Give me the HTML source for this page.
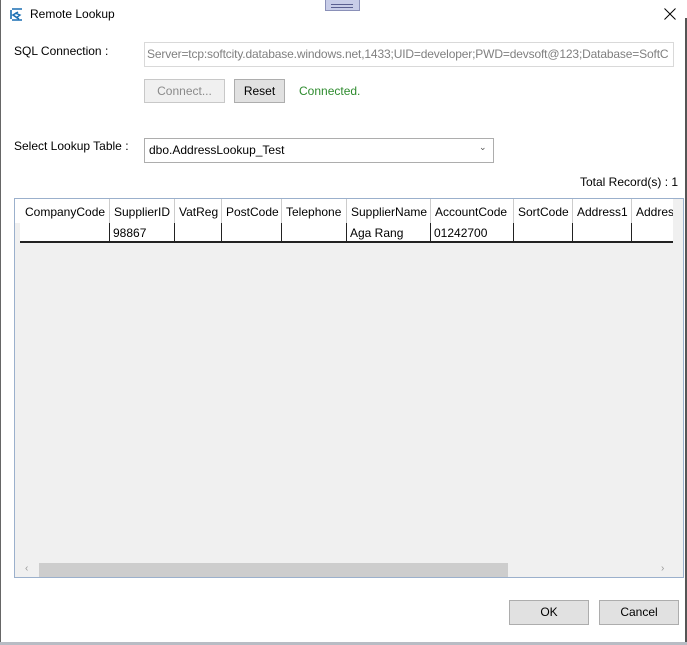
<!DOCTYPE html><html><head><style>
body{margin:0;width:687px;height:645px;background:#fff;position:relative;overflow:hidden;font-family:"Segoe UI","Liberation Sans",sans-serif;font-size:12px;color:#000}
.a{position:absolute}
.btn{position:absolute;border:1px solid #adadad;background:#e1e1e1;text-align:center;box-sizing:border-box}
.c{position:absolute;top:0;height:100%;border-left:1px solid #ccc}
.t{position:absolute;white-space:nowrap}
</style></head><body>
<div class="a" style="left:0;top:0;width:1px;height:643px;background:#666"></div>
<div class="a" style="left:685px;top:18px;width:2px;height:625px;background:#555"></div>
<div class="a" style="left:0;top:642px;width:687px;height:3px;background:#b8bcc4"></div>
<div class="a" style="left:325px;top:0;width:33px;height:10px;background:#c8cde8;border:1px solid #8a90b8;border-top:none"></div>
<div class="a" style="left:331px;top:4px;width:22px;height:2px;border-top:1px solid #5a5f90;border-bottom:1px solid #5a5f90"></div>
<svg class="a" style="left:10px;top:8px" width="14" height="13" viewBox="0 0 14 13"><path d="M2 1h10M1 2v9M2 12h10M8 4L3 7l6 4" stroke="#1a6fb3" stroke-width="1.6" fill="none"/><path d="M5 5l5 2-4 3" stroke="#1a6fb3" stroke-width="1.4" fill="none"/></svg>
<div class="t" style="left:30px;top:7px;font-size:12px">Remote Lookup</div>
<svg class="a" style="left:664px;top:8px" width="12" height="12" viewBox="0 0 12 12"><path d="M0.5 0.5L11.5 11.5M11.5 0.5L0.5 11.5" stroke="#000" stroke-width="1"/></svg>
<div class="t" style="left:14px;top:44px">SQL Connection :</div>
<div class="a" style="left:144px;top:42px;width:530px;height:25px;border:1px solid #d9d9d9;box-sizing:border-box;overflow:hidden"><div class="t" style="left:2px;top:4px;color:#808080;letter-spacing:-0.15px">Server=tcp:softcity.database.windows.net,1433;UID=developer;PWD=devsoft@123;Database=SoftC</div></div>
<div class="btn" style="left:144px;top:79px;width:81px;height:24px;background:#f0f0f0;border-color:#c8c8c8;color:#8a8a8a;line-height:22px">Connect...</div>
<div class="btn" style="left:234px;top:79px;width:51px;height:24px;line-height:22px">Reset</div>
<div class="t" style="left:299px;top:84px;color:#2e8b2e">Connected.</div>
<div class="t" style="left:14px;top:139px">Select Lookup Table :</div>
<div class="a" style="left:144px;top:138px;width:350px;height:25px;border:1px solid #adadad;box-sizing:border-box"><div class="t" style="left:4px;top:4px">dbo.AddressLookup_Test</div><div class="t" style="left:334px;top:3px;font-size:9px;color:#555">⌄</div></div>
<div class="t" style="left:580px;top:175px">Total Record(s) : 1</div>
<div class="a" style="left:14px;top:198px;width:670px;height:380px;border:1px solid #9bb0cc;box-sizing:border-box;background:#f0f0f0;overflow:hidden">
 <div class="a" style="left:0;top:0;width:658px;height:24px;background:#fff;overflow:hidden">
  <div class="c" style="left:94px"></div><div class="c" style="left:159px"></div><div class="c" style="left:206px"></div><div class="c" style="left:266px"></div><div class="c" style="left:331px"></div><div class="c" style="left:415px"></div><div class="c" style="left:498px"></div><div class="c" style="left:557px"></div><div class="c" style="left:616px"></div>
  <div class="t" style="left:10px;top:6px">CompanyCode</div><div class="t" style="left:99px;top:6px">SupplierID</div><div class="t" style="left:164px;top:6px">VatReg</div><div class="t" style="left:211px;top:6px">PostCode</div><div class="t" style="left:271px;top:6px">Telephone</div><div class="t" style="left:336px;top:6px">SupplierName</div><div class="t" style="left:420px;top:6px">AccountCode</div><div class="t" style="left:503px;top:6px">SortCode</div><div class="t" style="left:562px;top:6px">Address1</div><div class="t" style="left:621px;top:6px">Address2</div>
 </div>
 <div class="a" style="left:5px;top:24px;width:653px;height:20px;background:#fff;border-bottom:2px solid #222;box-sizing:border-box;overflow:hidden">
  <div class="c" style="left:89px;border-color:#222"></div><div class="c" style="left:154px;border-color:#222"></div><div class="c" style="left:201px;border-color:#222"></div><div class="c" style="left:261px;border-color:#222"></div><div class="c" style="left:326px;border-color:#222"></div><div class="c" style="left:410px;border-color:#222"></div><div class="c" style="left:493px;border-color:#222"></div><div class="c" style="left:552px;border-color:#222"></div><div class="c" style="left:611px;border-color:#222"></div>
  <div class="t" style="left:93px;top:3px">98867</div><div class="t" style="left:330px;top:3px">Aga Rang</div><div class="t" style="left:414px;top:3px">01242700</div>
 </div>
 <div class="a" style="left:24px;top:364px;width:469px;height:15px;background:#cdcdcd"></div>
 <div class="t" style="left:10px;top:364px;font-size:10px;color:#999">‹</div>
 <div class="t" style="left:646px;top:364px;font-size:10px;color:#999">›</div>
</div>
<div class="btn" style="left:509px;top:600px;width:80px;height:25px;line-height:23px">OK</div>
<div class="btn" style="left:599px;top:600px;width:80px;height:25px;line-height:23px">Cancel</div>
</body></html>
